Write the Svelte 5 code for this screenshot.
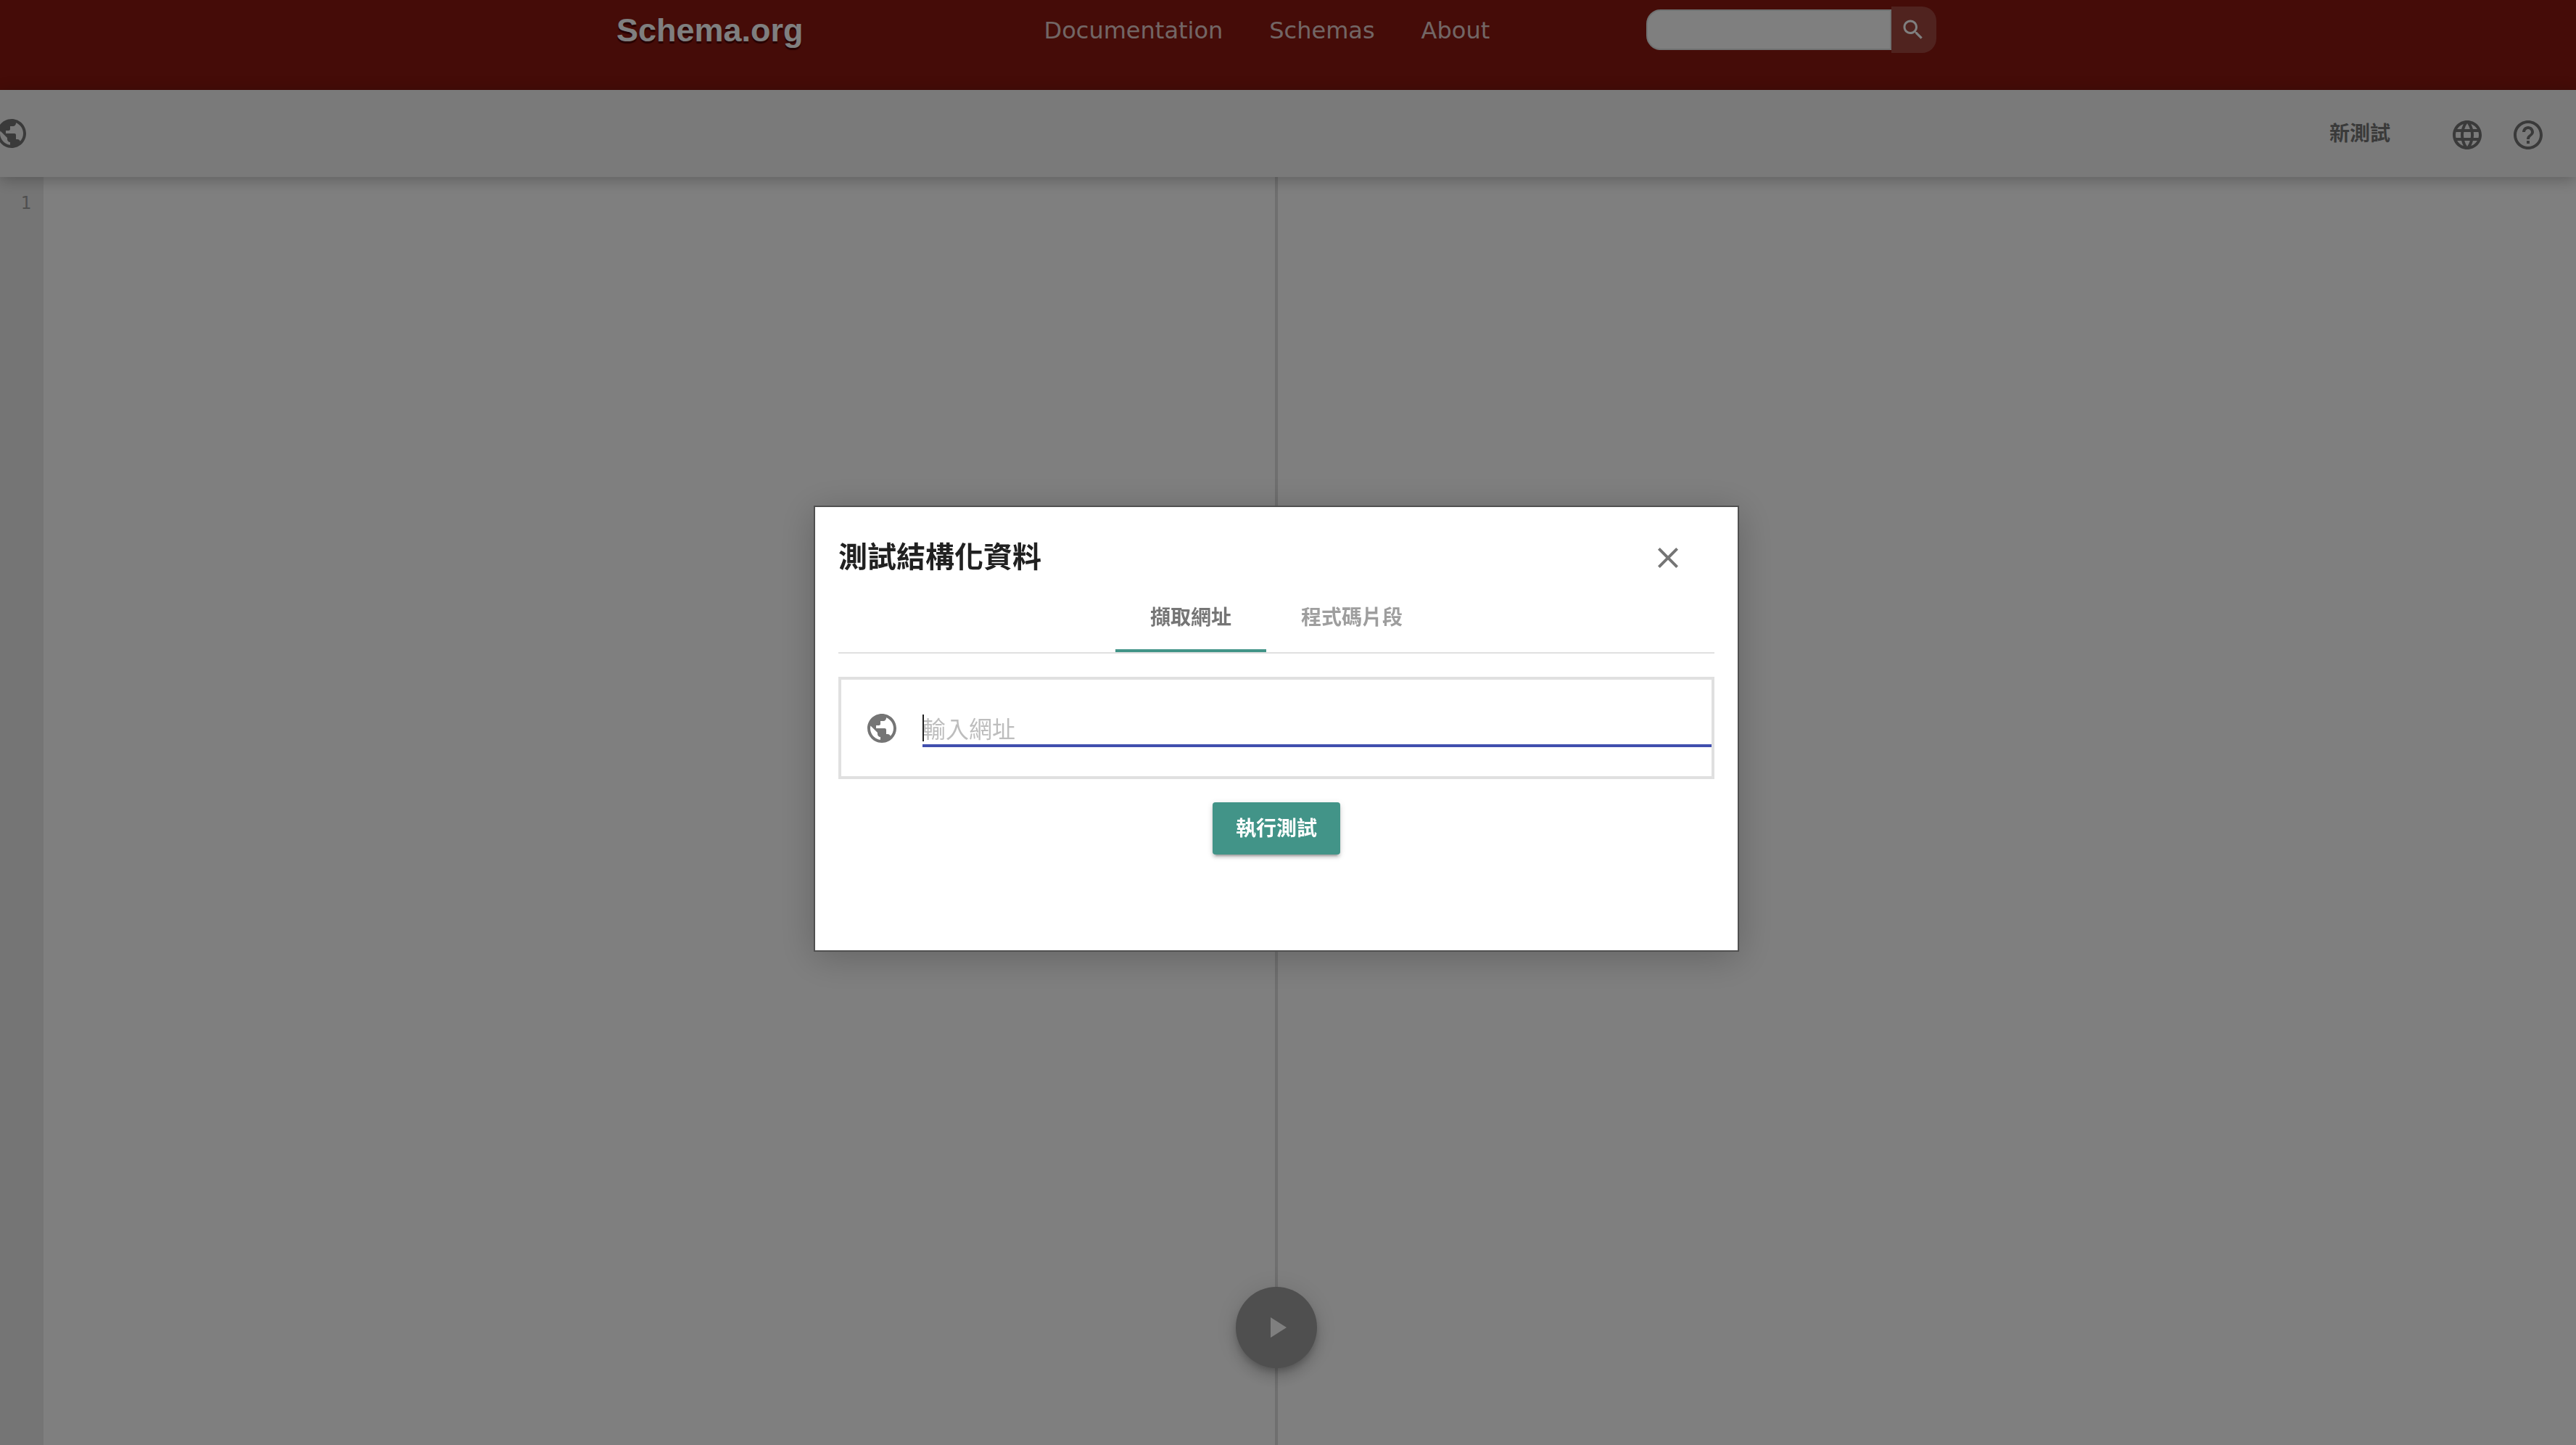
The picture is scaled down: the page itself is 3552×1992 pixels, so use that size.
<script>
  const links = ['Documentation', 'Schemas', 'About'];
  const tabs = [
    { id: 'url', label: '擷取網址' },
    { id: 'code', label: '程式碼片段' },
  ];
  const icons = {
    earth:
      'M12 2C6.48 2 2 6.48 2 12s4.48 10 10 10 10-4.48 10-10S17.52 2 12 2zm-1 17.93c-3.95-.49-7-3.85-7-7.93 0-.62.08-1.21.21-1.79L9 15v1c0 1.1.9 2 2 2v1.93zm6.9-2.54c-.26-.81-1-1.39-1.9-1.39h-1v-3c0-.55-.45-1-1-1H8v-2h2c.55 0 1-.45 1-1V7h2c1.1 0 2-.9 2-2v-.41c2.93 1.19 5 4.06 5 7.41 0 2.08-.8 3.97-2.1 5.39z',
    language:
      'M11.99 2C6.47 2 2 6.48 2 12s4.47 10 9.99 10C17.52 22 22 17.52 22 12S17.52 2 11.99 2zm6.93 6h-2.95c-.32-1.25-.78-2.45-1.38-3.56 1.84.63 3.37 1.91 4.33 3.56zM12 4.04c.83 1.2 1.48 2.53 1.91 3.96h-3.82c.43-1.43 1.08-2.76 1.91-3.96zM4.26 14C4.1 13.36 4 12.69 4 12s.1-1.36.26-2h3.38c-.08.66-.14 1.32-.14 2s.06 1.34.14 2H4.26zm.82 2h2.95c.32 1.25.78 2.45 1.38 3.56-1.84-.63-3.37-1.9-4.33-3.56zm2.95-8H5.08c.96-1.66 2.49-2.93 4.33-3.56C8.81 5.55 8.35 6.75 8.03 8zM12 19.96c-.83-1.2-1.48-2.53-1.91-3.96h3.82c-.43 1.43-1.08 2.76-1.91 3.96zM14.34 14H9.66c-.09-.66-.16-1.32-.16-2s.07-1.35.16-2h4.68c.09.65.16 1.32.16 2s-.07 1.34-.16 2zm.25 5.56c.6-1.11 1.06-2.31 1.38-3.56h2.95c-.96 1.65-2.49 2.93-4.33 3.56zM16.36 14c.08-.66.14-1.32.14-2s-.06-1.34-.14-2h3.38c.16.64.26 1.31.26 2s-.1 1.36-.26 2h-3.38z',
    help: 'M11 18h2v-2h-2v2zm1-16C6.48 2 2 6.48 2 12s4.48 10 10 10 10-4.48 10-10S17.52 2 12 2zm0 18c-4.41 0-8-3.59-8-8s3.59-8 8-8 8 3.59 8 8-3.59 8-8 8zm0-14c-2.21 0-4 1.79-4 4h2c0-1.1.9-2 2-2s2 .9 2 2c0 2-3 1.75-3 5h2c0-2.25 3-2.5 3-5 0-2.21-1.79-4-4-4z',
    search:
      'M15.5 14h-.79l-.28-.27C15.41 12.59 16 11.11 16 9.5 16 5.91 13.09 3 9.5 3S3 5.91 3 9.5 5.91 16 9.5 16c1.61 0 3.09-.59 4.23-1.57l.27.28v.79l5 4.99L20.49 19l-4.99-5zm-6 0C7.01 14 5 11.99 5 9.5S7.01 5 9.5 5 14 7.01 14 9.5 11.99 14 9.5 14z',
    close:
      'M19 6.41L17.59 5 12 10.59 6.41 5 5 6.41 10.59 12 5 17.59 6.41 19 12 13.41 17.59 19 19 17.59 13.41 12z',
    play: 'M8 5v14l11-7z',
  };

  let active = $state('url');
  let url = $state('');
</script>

{#snippet icon(name)}
  <svg class="icon" viewBox="0 0 24 24" aria-hidden="true"><path d={icons[name]} /></svg>
{/snippet}

<div class="page">
  <header class="site-header">
    <div class="site-row">
      <a class="logo" href="#home">Schema.org</a>
      <nav>
        {#each links as link}
          <a href="#{link.toLowerCase()}">{link}</a>
        {/each}
      </nav>
      <form class="search">
        <input type="text" aria-label="Search" />
        <button type="button" aria-label="Search">{@render icon('search')}</button>
      </form>
    </div>
  </header>

  <div class="toolbar">
    <span class="site-icon">{@render icon('earth')}</span>
    <div class="actions">
      <button type="button" class="new-test">新測試</button>
      <button type="button" class="icon-button" aria-label="語言">{@render icon('language')}</button>
      <button type="button" class="icon-button" aria-label="說明">{@render icon('help')}</button>
    </div>
  </div>

  <main class="panes">
    <section class="editor"><div class="gutter">1</div></section>
    <section class="results"></section>
  </main>

  <div class="fab-layer">
    <button type="button" class="fab" aria-label="執行">{@render icon('play')}</button>
  </div>
</div>

<div class="scrim">
  <div class="dialog" role="dialog" aria-modal="true" aria-labelledby="dialog-title">
    <div class="dialog-head">
      <h2 id="dialog-title">測試結構化資料</h2>
      <button type="button" class="close" aria-label="關閉">{@render icon('close')}</button>
    </div>
    <div class="tabs" role="tablist">
      {#each tabs as tab}
        <button
          type="button"
          role="tab"
          aria-selected={active === tab.id}
          class:active={active === tab.id}
          onclick={() => (active = tab.id)}>{tab.label}</button>
      {/each}
    </div>
    <div class="url-box">
      {@render icon('earth')}
      <div class="field" class:empty={url === ''}>
        <input type="text" placeholder="輸入網址" aria-label="輸入網址" bind:value={url} />
      </div>
    </div>
    <button type="button" class="run">執行測試</button>
  </div>
</div>

<style>
  :global(body) {
    margin: 0;
    background: #fff;
  }

  .page,
  .scrim {
    font-family: Roboto, 'Noto Sans CJK TC', sans-serif;
    font-size: 28px;
    line-height: 48px;
  }

  .page {
    display: flex;
    flex-direction: column;
    min-height: 100vh;
    overflow: hidden;
  }

  button,
  input {
    box-sizing: border-box;
    margin: 0;
    padding: 0;
    border: 0;
    background: none;
    color: inherit;
    font: inherit;
    outline: 0;
  }

  button {
    cursor: pointer;
  }

  .icon {
    display: block;
    flex: none;
    width: 48px;
    height: 48px;
    fill: currentColor;
  }

  .site-header {
    box-sizing: border-box;
    min-height: 124px;
    padding: 9px 32px 0 0;
    background: #8a1810;
  }

  .site-row {
    display: flex;
    align-items: center;
    max-width: 1820px;
    margin: 0 auto;
  }

  .logo {
    padding-top: 2px;
    color: #fff;
    font: bold 45px/56px 'Liberation Sans', sans-serif;
    text-decoration: none;
    text-shadow: 0 3px 1px #4a0000;
  }

  nav {
    display: flex;
    gap: 64px;
    margin-left: 332px;
    padding-top: 2px;
  }

  nav a {
    color: rgba(255, 255, 255, 0.8);
    font: 32px/48px 'DejaVu Sans', sans-serif;
    text-decoration: none;
  }

  .search {
    display: flex;
    align-items: center;
    margin: 0 0 0 auto;
  }

  .search input {
    width: 338px;
    height: 56px;
    border: 2px solid #e0e4e4;
    border-radius: 20px 0 0 20px;
    background: #fff;
  }

  .search button {
    display: flex;
    align-items: center;
    padding: 0 14px 0 12px;
    height: 64px;
    border-radius: 0 20px 20px 0;
    background: rgba(255, 255, 255, 0.2);
    color: #fff;
  }

  .search .icon {
    width: 36px;
    height: 36px;
  }

  .toolbar {
    position: relative;
    z-index: 1;
    display: flex;
    align-items: center;
    justify-content: space-between;
    height: 120px;
    padding-right: 42px;
    background: #f5f5f5;
    box-shadow: 0 4px 20px rgba(0, 0, 0, 0.26);
    color: #757575;
  }

  .site-icon {
    margin-left: -8px;
  }

  .actions {
    display: flex;
    align-items: center;
    gap: 36px;
  }

  .icon-button {
    padding-top: 4px;
  }

  .new-test {
    margin-right: 46px;
    padding-top: 2px;
    font-weight: 700;
  }

  .panes {
    display: flex;
    flex: 1;
    padding-right: 32px;
  }

  .editor,
  .results {
    flex: 1;
  }

  .editor {
    display: flex;
    border-right: 2px solid #dedede;
  }

  .results {
    border-left: 2px solid #dedede;
  }

  .gutter {
    box-sizing: border-box;
    width: 60px;
    padding: 12px 17px 0 0;
    background: #ebebeb;
    color: #9e9e9e;
    font: 24px/48px 'DejaVu Sans Mono', monospace;
    text-align: right;
  }

  .fab-layer {
    position: fixed;
    inset: auto 0 106px 0;
    display: flex;
    justify-content: center;
    padding-right: 32px;
  }

  .fab {
    display: flex;
    align-items: center;
    justify-content: center;
    width: 112px;
    height: 112px;
    border-radius: 50%;
    background: #9e9e9e;
    box-shadow:
      0 6px 10px -2px rgba(0, 0, 0, 0.2),
      0 12px 20px rgba(0, 0, 0, 0.14),
      0 2px 36px rgba(0, 0, 0, 0.12);
    color: #fff;
  }

  .scrim {
    position: fixed;
    inset: 0;
    z-index: 2;
    display: flex;
    align-items: center;
    justify-content: center;
    padding: 17px 32px 0 0;
    background: rgba(0, 0, 0, 0.5);
  }

  .dialog {
    display: flex;
    flex-direction: column;
    box-sizing: border-box;
    width: 100%;
    max-width: 1276px;
    padding: 46px 32px 132px;
    border: 2px solid #505050;
    background: #fff;
    box-shadow: 0 8px 48px rgba(0, 0, 0, 0.22);
    color: #757575;
  }

  .dialog-head {
    display: flex;
    align-items: center;
    justify-content: space-between;
    padding: 0 40px 10px 0;
  }

  h2 {
    margin: 0;
    color: #212121;
    font-size: 40px;
    font-weight: 700;
    line-height: 48px;
  }

  .tabs {
    display: flex;
    justify-content: center;
    border-bottom: 2px solid #e0e0e0;
  }

  .tabs button {
    height: 96px;
    padding: 6px 48px 0;
    border-bottom: 4px solid transparent;
    color: #9e9e9e;
    font-weight: 700;
  }

  .tabs .active {
    border-color: #429488;
    color: #757575;
  }

  .url-box {
    display: flex;
    align-items: center;
    gap: 32px;
    box-sizing: border-box;
    height: 141px;
    margin: 32px 0;
    padding-left: 32px;
    border: 4px solid #e0e0e0;
  }

  .field {
    position: relative;
    flex: 1;
    display: flex;
  }

  .field.empty::before {
    content: '';
    position: absolute;
    top: 7px;
    left: 0;
    width: 2px;
    height: 37px;
    background: #212121;
  }

  .field input {
    width: 100%;
    height: 52px;
    padding-top: 9px;
    border-bottom: 4px solid #414fae;
    color: #212121;
    font-size: 32px;
    line-height: 38px;
  }

  .field input::placeholder {
    color: #bdbdbd;
    opacity: 1;
  }

  .run {
    align-self: center;
    height: 72px;
    padding: 2px 32px 0;
    border-radius: 4px;
    background: #429488;
    box-shadow:
      0 6px 2px -4px rgba(0, 0, 0, 0.2),
      0 4px 4px rgba(0, 0, 0, 0.14),
      0 2px 10px rgba(0, 0, 0, 0.12);
    color: #fff;
    font-weight: 700;
  }
</style>
